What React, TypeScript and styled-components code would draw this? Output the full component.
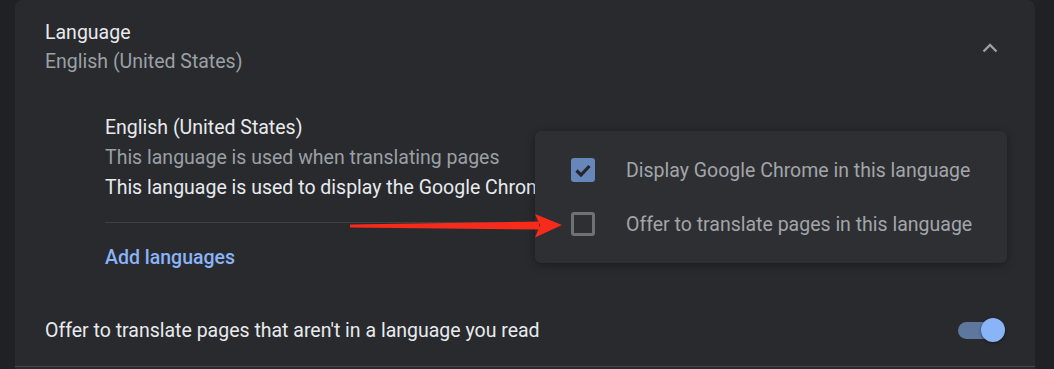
import { styled, createGlobalStyle } from 'styled-components'

const GlobalStyle = createGlobalStyle`
  html, body {
    margin: 0;
    padding: 0;
    background: #202124;
    font-family: Roboto, "Liberation Sans", Arial, sans-serif;
    -webkit-font-smoothing: antialiased;
  }
`

const texts = {
  title: 'Language',
  current: 'English (United States)',
  langName: 'English (United States)',
  translating: 'This language is used when translating pages',
  display: 'This language is used to display the Google Chrome UI',
  addLanguages: 'Add languages',
  offerAll: "Offer to translate pages that aren't in a language you read",
  menuDisplay: 'Display Google Chrome in this language',
  menuOffer: 'Offer to translate pages in this language'
}

export default function App() {
  return (
    <>
      <GlobalStyle />
      <Page>
        <Card>
          <Header>
            <div>
              <Title>{texts.title}</Title>
              <SubTitle>{texts.current}</SubTitle>
            </div>
            <IconButton aria-label="collapse">
              <svg width="16" height="10" viewBox="0 0 16 10">
                <polyline
                  points="1.5,8.5 8,2 14.5,8.5"
                  fill="none"
                  stroke="#9aa0a6"
                  strokeWidth="2.4"
                />
              </svg>
            </IconButton>
          </Header>

          <LanguageList>
            <LangLine>{texts.langName}</LangLine>
            <LangLine $muted>{texts.translating}</LangLine>
            <LangLine>{texts.display}</LangLine>
            <Divider />
            <AddLink>{texts.addLanguages}</AddLink>
          </LanguageList>

          <ToggleRow>
            <RowLabel>{texts.offerAll}</RowLabel>
            <Toggle>
              <Knob />
            </Toggle>
          </ToggleRow>

          <Menu>
            <MenuItem>
              <Checkbox $checked>
                <svg width="18" height="15" viewBox="0 0 18 15">
                  <polyline
                    points="2.5,7.5 7,12 15.5,3"
                    fill="none"
                    stroke="#25262a"
                    strokeWidth="3.2"
                  />
                </svg>
              </Checkbox>
              <MenuText>{texts.menuDisplay}</MenuText>
            </MenuItem>
            <MenuItem>
              <Checkbox />
              <MenuText>{texts.menuOffer}</MenuText>
            </MenuItem>
          </Menu>
        </Card>

        {/* red annotation arrow */}
        <Arrow width="1054" height="369" viewBox="0 0 1054 369">
          <polygon
            points="350,224.5 539,221.5 539,229.5 350,227.5"
            fill="#f72a1c"
          />
          <polygon points="535,214 562,225 535,237.5 540,225" fill="#f72a1c" />
        </Arrow>
      </Page>
    </>
  )
}

const Page = styled.div`
  position: relative;
  height: 369px;
  padding: 0 19px 0 15px;
  overflow: hidden;
`

const Card = styled.div`
  position: relative;
  height: 369px;
  background: #292a2d;
  border-radius: 8px 8px 0 0;
  font-size: 19.5px;
  color: #e8eaed;
`

const Header = styled.div`
  display: flex;
  align-items: center;
  justify-content: space-between;
  padding: 19px 27px 0 30px;
`

const Title = styled.div`
  line-height: 28px;
  color: #e8eaed;
`

const SubTitle = styled.div`
  line-height: 30px;
  color: #9aa0a6;
`

const IconButton = styled.button`
  all: unset;
  width: 36px;
  height: 36px;
  display: flex;
  align-items: center;
  justify-content: center;
`

const LanguageList = styled.div`
  display: flex;
  flex-direction: column;
  padding: 36px 30px 0 90px;
`

const LangLine = styled.div<{ $muted?: boolean }>`
  line-height: 30px;
  white-space: nowrap;
  color: ${(p) => (p.$muted ? '#9aa0a6' : '#e8eaed')};
`

const Divider = styled.div`
  height: 1px;
  margin: 19px 0 20px;
  background: #3f4043;
`

const AddLink = styled.a`
  line-height: 30px;
  font-weight: 500;
  color: #8ab4f8;
  cursor: pointer;
`

const ToggleRow = styled.div`
  display: flex;
  align-items: center;
  justify-content: space-between;
  height: 72px;
  margin-top: 21px;
  padding: 0 30px;
  border-bottom: 1px solid #46474a;
`

const RowLabel = styled.div`
  color: #e8eaed;
`

const Toggle = styled.div`
  position: relative;
  width: 42px;
  height: 17px;
  margin-right: 5px;
  border-radius: 9px;
  background: #5d779f;
`

const Knob = styled.div`
  position: absolute;
  top: -4px;
  right: -5px;
  width: 24px;
  height: 24px;
  border-radius: 50%;
  background: #8ab4f8;
  box-shadow: 0 1px 3px rgba(0, 0, 0, 0.45);
`

const Menu = styled.div`
  position: absolute;
  left: 520px;
  top: 131px;
  width: 472px;
  padding: 12px 0;
  background: #2e2f32;
  border-radius: 6px;
  box-shadow: 0 2px 8px rgba(0, 0, 0, 0.35);
`

const MenuItem = styled.div`
  display: flex;
  align-items: center;
  gap: 31px;
  height: 54px;
  padding-left: 36px;
`

const Checkbox = styled.div<{ $checked?: boolean }>`
  box-sizing: border-box;
  width: 24px;
  height: 24px;
  border-radius: 3px;
  display: flex;
  align-items: center;
  justify-content: center;
  background: ${(p) => (p.$checked ? '#6786ba' : 'transparent')};
  border: ${(p) => (p.$checked ? 'none' : '3px solid #6f7275')};
`

const MenuText = styled.div`
  color: #a2a5aa;
  white-space: nowrap;
`

const Arrow = styled.svg`
  position: absolute;
  left: 0;
  top: 0;
  pointer-events: none;
`
